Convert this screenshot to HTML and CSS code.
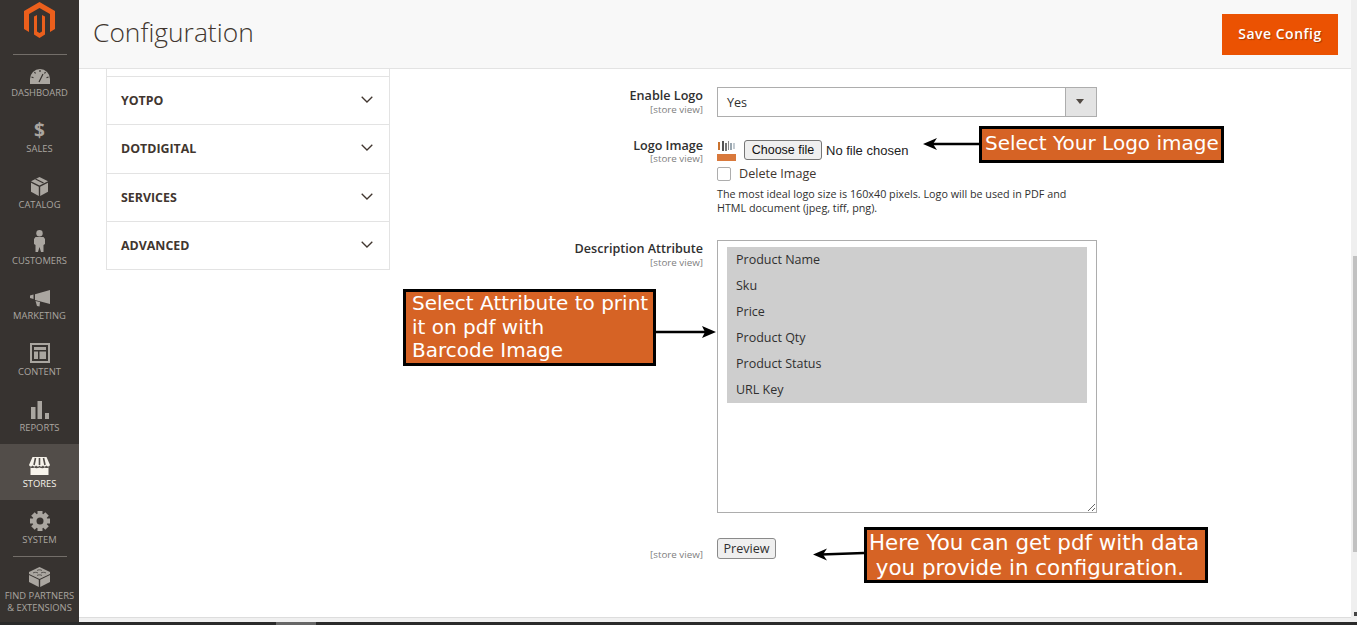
FILE: index.html
```html
<!DOCTYPE html>
<html lang="en">
<head>
    <meta charset="UTF-8">
    <title>Configuration</title>
    <link rel="stylesheet" href="styles.css">
</head>
<body>
<div class="shell">
    <nav class="sidebar">
        <div class="logo">
            <svg width="31" height="36" viewBox="24 2.5 31 36">
                <path d="M39.5 2.5L55 11.5V29.5L50 32.5V14.5L39.5 8.5L29 14.5V32.5L24 29.5V11.5Z"/>
                <path d="M34 17L37 15.5V32L39.5 33.5L42 32V15.5L45 17V35L39.5 38.5L34 35Z"/>
            </svg>
        </div>
        <a class="nav-item first">
            <svg class="icon" width="20" height="15" viewBox="0 0 20 15">
                <path d="M0 15V10A10 10 0 0 1 20 10V15Z"/>
                <path class="cut" d="M9 13L13 5M10 1v2M4.500 3l1 1.500M15.500 3l-1 1.500M1.500 8l2 .7M18.500 8l-2 .7"/>
            </svg>
            <span>Dashboard</span>
        </a>
        <a class="nav-item">
            <span class="dollar">$</span>
            <span>Sales</span>
        </a>
        <a class="nav-item">
            <svg class="icon" width="17" height="19" viewBox="0 0 17 19">
                <path d="M8.500 0L17 4.200L8.500 8.400L0 4.200Z"/>
                <path d="M0 5.800L7.800 9.800V19L0 14.800Z"/>
                <path d="M17 5.800L9.200 9.800V19L17 14.800Z"/>
                <path class="cut" d="M4.500 2L12.500 6"/>
            </svg>
            <span>Catalog</span>
        </a>
        <a class="nav-item">
            <svg class="icon" width="11" height="22" viewBox="0 0 11 22">
                <circle cx="5.500" cy="3.200" r="3.200"/>
                <path d="M1.500 7H9.500L11 9V14L9.500 15V22H7L5.500 17L4 22H1.500V15L0 14V9Z"/>
            </svg>
            <span>Customers</span>
        </a>
        <a class="nav-item short">
            <svg class="icon" width="20" height="17" viewBox="0 0 20 17">
                <path d="M0 5.500L3.500 4.500V9L0 8Z"/>
                <path d="M5 4.200L20 0V14L5 10Z"/>
                <path d="M5.500 11L10 12L9.500 16.500L7 16Z"/>
            </svg>
            <span>Marketing</span>
        </a>
        <a class="nav-item">
            <svg class="icon" width="20" height="20" viewBox="0 0 20 20">
                <path d="M0 0H20V20H0ZM2 2V18H18V2Z" fill-rule="evenodd"/>
                <rect x="4" y="4" width="12" height="3"/>
                <rect x="4" y="8.500" width="4" height="7.500"/>
                <rect x="9.500" y="8.500" width="6.500" height="7.500"/>
            </svg>
            <span>Content</span>
        </a>
        <a class="nav-item">
            <svg class="icon" width="18" height="18" viewBox="0 0 18 18">
                <rect x="0" y="6" width="4.500" height="12"/>
                <rect x="6.500" y="0" width="4.500" height="18"/>
                <rect x="14" y="12" width="4" height="6"/>
            </svg>
            <span>Reports</span>
        </a>
        <a class="nav-item active">
            <svg class="icon" width="21" height="18" viewBox="0 0 21 18">
                <path d="M3.500 0H17.500L21 8C20 10 18 10 17.500 8.500C16.500 10 14.500 10 14 8.500C13 10 11 10 10.500 8.500C10 10 8 10 7 8.500C6.500 10 4.500 10 3.500 8.500C3 10 1 10 0 8Z"/>
                <path class="stripe" d="M6.500 1L5 8M10.500 1V8M14.500 1L16 8"/>
                <path d="M1.500 10.500C3 11.500 4.500 11 5.200 10.500C6.500 11.500 8.500 11.500 10.500 10.500C12.500 11.500 14.500 11.500 15.800 10.500C16.500 11 18 11.500 19.500 10.500V18H1.500Z"/>
            </svg>
            <span>Stores</span>
        </a>
        <a class="nav-item">
            <svg class="icon" width="20" height="20" viewBox="0 0 20 20">
                <g transform="translate(10 10)">
                    <rect x="-2.500" y="-10" width="5" height="20"/>
                    <rect x="-2.500" y="-10" width="5" height="20" transform="rotate(45)"/>
                    <rect x="-2.500" y="-10" width="5" height="20" transform="rotate(90)"/>
                    <rect x="-2.500" y="-10" width="5" height="20" transform="rotate(135)"/>
                    <circle r="7.500"/>
                    <circle class="hole" r="3.500"/>
                </g>
            </svg>
            <span>System</span>
        </a>
        <div class="nav-sep"></div>
        <a class="nav-item partners">
            <svg class="icon" width="21" height="20" viewBox="0 0 21 20">
                <path d="M10.500 0L21 5V7L10.500 12L0 7V5Z"/>
                <path d="M0 8L9.800 12.800V20L0 15Z"/>
                <path d="M21 8L11.200 12.800V20L21 15Z"/>
                <path class="cut thin" d="M4 6a3 1.500 0 0 1 5 0M12 6a3 1.500 0 0 1 5 0M8 3.500a3 1.500 0 0 1 5 0M8 8.500a3 1.500 0 0 1 5 0"/>
            </svg>
            <span>Find Partners<br>&amp; Extensions</span>
        </a>
    </nav>

    <div class="page">
        <header class="page-header">
            <h1>Configuration</h1>
            <button class="save-btn" type="button">Save Config</button>
        </header>

        <main class="content">
            <aside class="tabs">
                <div class="tab-stub"></div>
                <div class="tab">YOTPO<svg width="12" height="7" viewBox="0 0 12 7"><path d="M.7.7L6 6L11.300.7"/></svg></div>
                <div class="tab tall">DOTDIGITAL<svg width="12" height="7" viewBox="0 0 12 7"><path d="M.7.7L6 6L11.300.7"/></svg></div>
                <div class="tab">SERVICES<svg width="12" height="7" viewBox="0 0 12 7"><path d="M.7.7L6 6L11.300.7"/></svg></div>
                <div class="tab">ADVANCED<svg width="12" height="7" viewBox="0 0 12 7"><path d="M.7.7L6 6L11.300.7"/></svg></div>
            </aside>

            <section class="form">
                <div class="row row-logo-enable">
                    <div class="label"><b>Enable Logo</b><small>[store view]</small></div>
                    <div class="select">
                        <span>Yes</span>
                        <i class="select-arrow"></i>
                    </div>
                </div>

                <div class="row row-logo-image">
                    <div class="label"><b>Logo Image</b><small>[store view]</small></div>
                    <div>
                        <div class="file-line">
                            <svg class="thumb" width="20" height="21" viewBox="0 0 20 21">
                                <rect x="1" y="2" width="2" height="8" fill="#c9722f"/>
                                <rect x="5" y="1" width="2" height="10" fill="#555"/>
                                <rect x="8" y="3" width="2" height="8" fill="#777"/>
                                <rect x="11" y="1" width="1" height="9" fill="#8a8a8a"/>
                                <rect x="13" y="3" width="2" height="7" fill="#9aa7b0"/>
                                <rect x="16" y="3" width="2" height="6" fill="#c3cbd1"/>
                                <rect x="0" y="14" width="19" height="7" fill="#d9793c"/>
                            </svg>
                            <button class="file-btn" type="button">Choose file</button>
                            <span class="file-name">No file chosen</span>
                        </div>
                        <label class="check-line"><i class="check"></i>Delete Image</label>
                        <p class="note">The most ideal logo size is 160x40 pixels. Logo will be used in PDF and<br>HTML document (jpeg, tiff, png).</p>
                    </div>
                </div>

                <div class="row row-attrs">
                    <div class="label"><b>Description Attribute</b><small>[store view]</small></div>
                    <div class="multi">
                        <div class="opt">Product Name</div>
                        <div class="opt">Sku</div>
                        <div class="opt">Price</div>
                        <div class="opt">Product Qty</div>
                        <div class="opt">Product Status</div>
                        <div class="opt">URL Key</div>
                    </div>
                </div>

                <div class="row">
                    <div class="label label-end"><small>[store view]</small></div>
                    <div><button class="preview" type="button">Preview</button></div>
                </div>
            </section>
        </main>
        <div class="page-foot"></div>
    </div>

    <div class="scrollbar"><div class="scrollbar-thumb"></div><i class="scrollbar-arrow"></i></div>
</div>
<div class="hscroll"><div class="hscroll-thumb"></div></div>

<!-- annotations on top of the screenshot -->
<div class="callout callout-logo">Select Your Logo image</div>
<div class="callout callout-attr">Select Attribute to print<br>it on pdf with<br>Barcode Image</div>
<div class="callout callout-pdf">Here You can get pdf with data<br>&nbsp;you provide in configuration.</div>
<svg class="arrow arrow-logo" width="56" height="14" viewBox="0 0 56 14"><path d="M56 7H8"/><path class="head" d="M0 7L14 1L10 7L14 13Z"/></svg>
<svg class="arrow arrow-attr" width="61" height="14" viewBox="0 0 61 14"><path d="M0 7H52"/><path class="head" d="M61 7L47 1L50 7L47 13Z"/></svg>
<svg class="arrow arrow-pdf" width="51" height="14" viewBox="0 0 51 14"><path d="M51 6L8 7.500"/><path class="head" d="M0 7.500L14 1.500L10 7.500L14 13.500Z"/></svg>
</body>
</html>
```

FILE: styles.css
```css
* {
  box-sizing: border-box;
  margin: 0;
  padding: 0;
}

html, body {
  width: 100%;
  height: 100%;
  overflow: hidden;
  font-family: "Open Sans", sans-serif;
  color: #303030;
  background: #fff;
}

.shell {
  display: flex;
  height: 622px;
}

/* Sidebar */
.sidebar {
  width: 79px;
  flex: none;
  background: #373330;
  display: flex;
  flex-direction: column;
}

.logo {
  height: 55px;
  margin: 0 12px 0 13px;
  padding-top: 2px;
  display: flex;
  justify-content: center;
  border-bottom: 1px solid #736e69;
}

.logo svg {
  fill: #eb5f1c;
  margin-left: -1px;
}

.nav-item {
  height: 56px;
  flex: none;
  display: flex;
  flex-direction: column;
  align-items: center;
  justify-content: flex-end;
  padding-bottom: 10px;
  color: #aaa6a0;
  font-size: 9.400px;
  line-height: 12px;
  text-transform: uppercase;
  text-align: center;
}

.nav-item.first {
  height: 54px;
}

.nav-item.short {
  height: 55px;
}

.nav-item .icon {
  fill: #aaa6a0;
  margin-bottom: 3px;
}

.nav-item .cut {
  fill: none;
  stroke: #373330;
  stroke-width: 1.2;
}

.nav-item .cut.thin {
  stroke-width: .7;
}

.nav-item .hole {
  fill: #373330;
}

.dollar {
  font-size: 19px;
  font-weight: 700;
  line-height: 20px;
  margin-bottom: 3px;
}

.nav-item.active {
  background: #524d49;
  color: #f7f3eb;
}

.nav-item.active .icon {
  fill: #f7f3eb;
}

.nav-item .stripe {
  fill: none;
  stroke: #524d49;
  stroke-width: 1.6;
}

.nav-sep {
  height: 1px;
  flex: none;
  margin: 0 12px 0 13px;
  background: #736e69;
}

.nav-item.partners {
  height: 65px;
  padding-bottom: 8px;
  white-space: nowrap;
}

/* Page */
.page {
  flex: 1;
  display: flex;
  flex-direction: column;
  min-width: 0;
}

.page-header {
  height: 69px;
  flex: none;
  background: #f8f8f8;
  border-bottom: 1px solid #e3e3e3;
  display: flex;
  align-items: flex-start;
  justify-content: space-between;
  padding: 14px 13px 0 14px;
}

.page-header h1 {
  font-size: 26.400px;
  font-weight: 300;
  line-height: 37px;
  color: #41362f;
}

.save-btn {
  width: 116px;
  height: 41px;
  padding-bottom: 2px;
  border: 0;
  background: #eb5202;
  color: #fff;
  font: 600 14px "Open Sans", sans-serif;
  letter-spacing: .5px;
  text-shadow: 1px 1px 1px rgba(0, 0, 0, .3);
}

.content {
  flex: 1;
  display: flex;
  padding-left: 27px;
  border-bottom: 1px solid #ddd;
  min-height: 0;
  overflow: hidden;
}

.page-foot {
  height: 4px;
  flex: none;
  background: #f0f0f0;
}

/* Left tabs */
.tabs {
  width: 284px;
  flex: none;
  align-self: flex-start;
  border: 1px solid #e3e3e3;
  border-top: 0;
}

.tab-stub {
  height: 7px;
}

.tab {
  height: 48px;
  padding: 0 16px 1px 14px;
  display: flex;
  align-items: center;
  justify-content: space-between;
  border-top: 1px solid #e3e3e3;
  font-size: 12.400px;
  font-weight: 700;
  color: #41362f;
}

.tab.tall {
  height: 49px;
}

.tab svg {
  fill: none;
  stroke: #41362f;
  stroke-width: 1.3;
  margin-top: -2px;
}

/* Form */
.form {
  padding: 18px 0 0 113px;
}

.row {
  display: grid;
  grid-template-columns: 200px 380px;
  column-gap: 14px;
}

.row-logo-enable {
  margin-bottom: 21px;
}

.row-logo-image {
  margin-bottom: 25px;
}

.row-attrs {
  margin-bottom: 25px;
}

.label {
  padding-top: 1px;
  text-align: right;
  font-size: 12.600px;
  line-height: 16px;
  color: #303030;
}

.row-logo-image .label {
  margin-top: -1px;
}

.row-logo-image .label small {
  margin-top: -1px;
}

.label b {
  display: block;
  font-weight: 600;
}

.label small {
  display: block;
  font-size: 9.800px;
  line-height: 12px;
  color: #808080;
}

.label-end {
  padding-top: 11px;
}

.select {
  height: 30px;
  border: 1px solid #adadad;
  display: flex;
  align-items: center;
  justify-content: space-between;
  padding-left: 9px;
  font-size: 12.600px;
}

.select-arrow {
  width: 31px;
  height: 28px;
  background: #e3e3e3;
  border-left: 1px solid #adadad;
  position: relative;
}

.select-arrow::after {
  content: "";
  position: absolute;
  left: 10px;
  top: 11px;
  border-style: solid;
  border-width: 5px 4px 0;
  border-color: #514943 transparent transparent;
}

.file-line {
  height: 24px;
  display: flex;
  align-items: center;
  gap: 7px;
}

.thumb {
  flex: none;
}

.file-btn {
  width: 78px;
  height: 20px;
  flex: none;
  margin-left: 0;
  border: 1px solid #767676;
  border-radius: 3px;
  background: #efefef;
  font: 12.500px "Liberation Sans", sans-serif;
  color: #111;
}

.file-name {
  margin-left: -3px;
  font: 13px "Liberation Sans", sans-serif;
  color: #222;
}

.check-line {
  height: 21px;
  margin-top: 1px;
  display: flex;
  align-items: center;
  gap: 8px;
  font-size: 12.600px;
  color: #41362f;
}

.check {
  width: 14px;
  height: 14px;
  border: 1px solid #adadad;
  border-radius: 2px;
  background: #fff;
}

.note {
  margin-top: 3px;
  font-size: 10.750px;
  line-height: 14px;
  color: #303030;
}

.multi {
  height: 273px;
  padding: 6px 9px;
  border: 1px solid #adadad;
  resize: both;
  overflow: hidden;
}

.opt {
  height: 26px;
  padding-left: 9px;
  background: #cecece;
  font-size: 12.500px;
  line-height: 26px;
  color: #303030;
}

.preview {
  display: block;
  width: 59px;
  height: 21px;
  padding-bottom: 1px;
  border: 1px solid #8a8a8a;
  border-radius: 3px;
  background: #efefef;
  font: 12.600px "Open Sans", sans-serif;
  color: #303030;
}

/* Scrollbars */
.scrollbar {
  width: 6px;
  flex: none;
  background: #efefef;
  position: relative;
}

.scrollbar-thumb {
  position: absolute;
  top: 256px;
  left: 2px;
  right: 0;
  height: 296px;
  background: #c1c1c1;
}

.scrollbar-arrow {
  position: absolute;
  top: 612px;
  right: 0;
  width: 3px;
  height: 4px;
  background: #444;
}

.hscroll {
  height: 3px;
  background: #2a2a2a;
  padding-left: 276px;
}

.hscroll-thumb {
  width: 40px;
  height: 3px;
  background: #666;
}

/* Callouts over the page */
.callout {
  position: absolute;
  background: #d66325;
  border: 3px solid #000;
  color: #fff;
  font-family: "DejaVu Sans", sans-serif;
  font-size: 20px;
  white-space: nowrap;
}

.callout-logo {
  left: 979px;
  top: 126px;
  width: 245px;
  height: 37px;
  padding-left: 3px;
  line-height: 29px;
}

.callout-attr {
  left: 403px;
  top: 289px;
  width: 253px;
  height: 77px;
  padding-left: 6px;
  line-height: 23.500px;
}

.callout-pdf {
  left: 864px;
  top: 527px;
  width: 344px;
  height: 56px;
  padding-left: 2px;
  font-size: 21.400px;
  line-height: 25px;
}

.arrow {
  position: absolute;
}

.arrow path {
  fill: none;
  stroke: #000;
  stroke-width: 2.600;
}

.arrow .head {
  fill: #000;
  stroke: none;
}

.arrow-logo {
  left: 923px;
  top: 137px;
}

.arrow-attr {
  left: 655px;
  top: 325px;
}

.arrow-pdf {
  left: 813px;
  top: 547px;
}
```
